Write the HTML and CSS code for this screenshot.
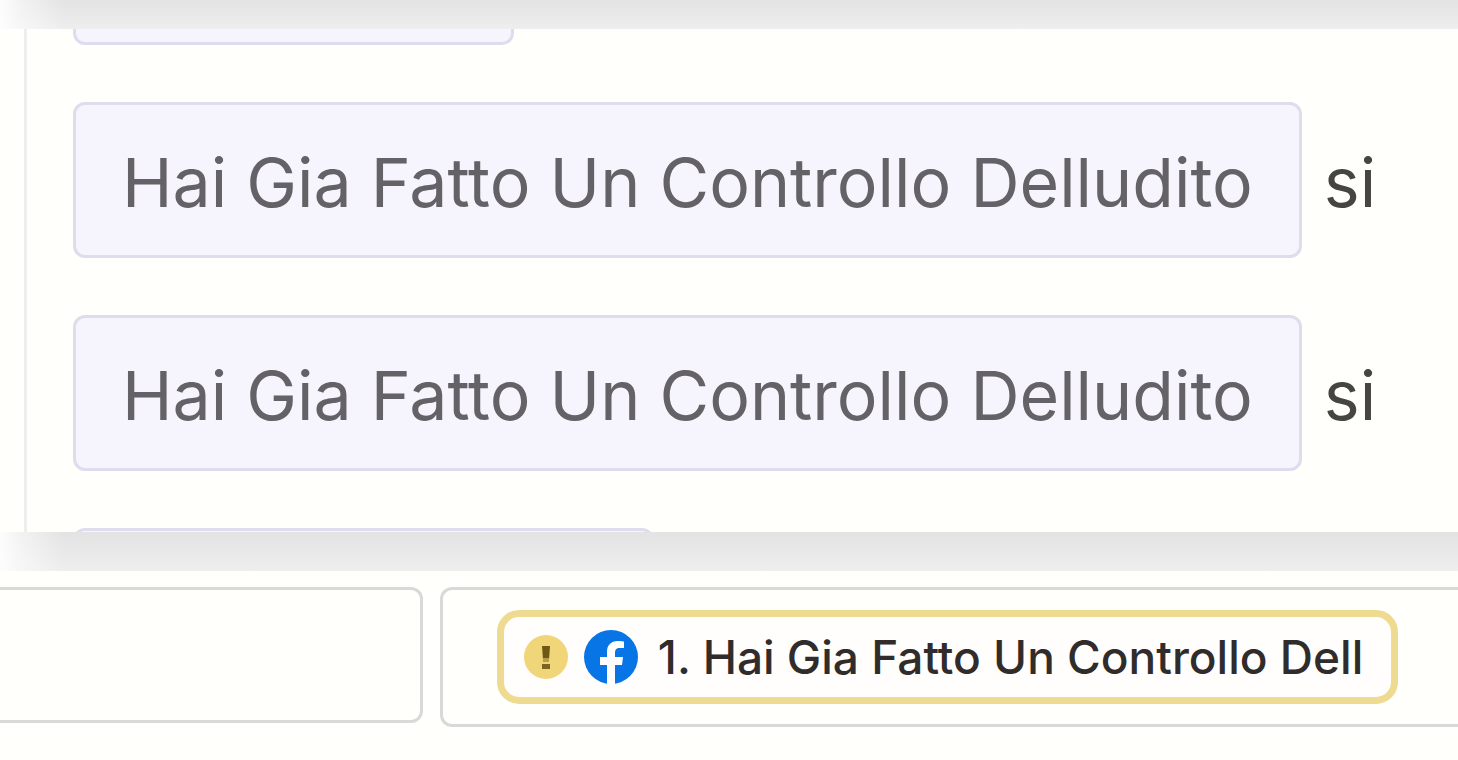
FILE: index.html
```html
<!DOCTYPE html>
<html lang="it">
<head>
<meta charset="utf-8">
<title>Hai Gia Fatto Un Controllo</title>
<link rel="stylesheet" href="styles.css">
</head>
<body>
<div class="shade shade-top"></div>
<main class="panel">
  <ul class="fields">
    <li class="row"><span class="tag tag-end"></span></li>
    <li class="row"><span class="tag">Hai Gia Fatto Un Controllo Delludito</span><span class="value">si</span></li>
    <li class="row"><span class="tag">Hai Gia Fatto Un Controllo Delludito</span><span class="value">si</span></li>
    <li class="row row-start"><span class="tag tag-start"></span></li>
  </ul>
</main>
<div class="shade shade-mid"></div>
<section class="mapping">
  <div class="cell cell-empty"></div>
  <div class="cell cell-field">
    <div class="pill">
      <svg class="warn" viewBox="0 0 44 44" aria-hidden="true">
        <circle cx="22" cy="22" r="22" fill="#f1d679"/>
        <path d="M18 11h8l-1 14h-6z" fill="#6f5715"/>
        <path d="M19 23h6v4h-6z" fill="#b59c50"/>
        <path d="M18 29h8v5h-8z" fill="#7c6420"/>
      </svg>
      <svg class="brand" viewBox="0 0 54 54" aria-hidden="true">
        <circle cx="27" cy="27" r="27" fill="#0875e6"/>
        <path d="M23 54V35h-7v-8h7v-5c0-7 4-11 11-11 3 0 5 .3 6 .6v6.4h-4c-4 0-5 2-5 5v4h8l-1 8h-7v19z" fill="#fff"/>
      </svg>
      <span class="label">1. Hai Gia Fatto Un Controllo Dell</span>
    </div>
  </div>
</section>
</body>
</html>
```
FILE: styles.css
```css
* {
  box-sizing: border-box;
}

body {
  margin: 0;
  min-height: 100vh;
  display: flex;
  flex-direction: column;
  overflow-x: hidden;
  background: #fffffc;
  font-family: Inter, "Liberation Sans", sans-serif;
}

.shade {
  flex: none;
  background:
    linear-gradient(to right, #fdfdfd 0, rgba(253, 253, 253, 0.6) 20px, rgba(253, 253, 253, 0) 64px),
    linear-gradient(#e3e3e3, #eeeeee);
}

.shade-top {
  height: 29px;
}

.shade-mid {
  height: 39px;
}

.panel {
  padding-left: 24px;
}

.fields {
  margin: 0;
  padding: 0 0 0 46px;
  border-left: 3px solid #efeeec;
  list-style: none;
  display: flex;
  flex-direction: column;
  gap: 57px;
}

.row {
  display: flex;
  align-items: baseline;
  gap: 22px;
  white-space: nowrap;
}

.row-start {
  height: 4px;
  align-items: flex-start;
  overflow: hidden;
}

.tag {
  padding: 36px 46px 32px;
  border: 3px solid #dfdcee;
  border-radius: 12px;
  background: #f6f5fd;
  color: #646266;
  font-size: 68px;
  line-height: 82px;
}

.tag-end {
  width: 441px;
  height: 16px;
  padding: 0;
  border-top: 0;
  border-radius: 0 0 12px 12px;
}

.tag-start {
  width: 581px;
  height: 24px;
  padding: 0;
}

.value {
  color: #474542;
  font-size: 68px;
  line-height: 82px;
}

.mapping {
  padding-top: 16px;
  display: flex;
  align-items: flex-start;
  gap: 17px;
}

.cell {
  border: 3px solid #dad9d7;
}

.cell-empty {
  flex: none;
  width: 29%;
  height: 136px;
  border-left: 0;
  border-radius: 0 12px 12px 0;
}

.cell-field {
  flex: 1;
  padding: 20px 54px;
  border-right: 0;
  border-radius: 12px 0 0 12px;
}

.pill {
  width: max-content;
  padding: 13px 28px 13px 20px;
  border: 7px solid #eedb91;
  border-radius: 22px;
  display: flex;
  align-items: center;
  background: #fffefc;
}

.warn {
  width: 44px;
  height: 44px;
  margin-right: 16px;
}

.brand {
  width: 54px;
  height: 54px;
  margin-right: 20px;
}

.label {
  color: #302c2b;
  font-size: 46px;
  font-weight: 500;
  line-height: 50px;
  white-space: nowrap;
}
```
